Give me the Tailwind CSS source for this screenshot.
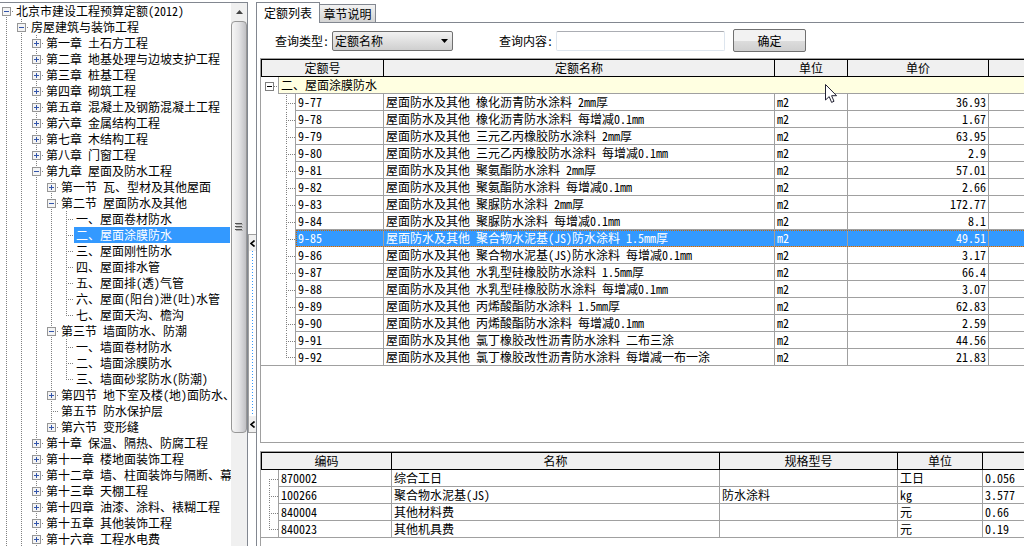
<!DOCTYPE html>
<html lang="zh-CN">
<head>
<meta charset="utf-8">
<title>北京市建设工程预算定额(2012)</title>
<script src="https://cdn.jsdelivr.net/npm/@tailwindcss/browser@4"></script>
</head>
<body class="h-screen overflow-hidden bg-white text-black font-['Noto_Sans_CJK_SC',sans-serif] text-[12px] leading-4 [font-feature-settings:'hwid']">
<div class="flex h-full">

  <!-- Chapter tree -->
  <aside class="mt-0.5 flex w-[248px] shrink-0 border-t border-r border-[#828790]">
    <ul id="tree" role="tree" class="min-w-0 flex-1"></ul>
    <div class="ml-px flex w-4 shrink-0 flex-col bg-[#f0f0f0]">
      <button type="button" aria-label="向上滚动" class="flex h-[18px] items-center justify-center">
        <svg width="7" height="4" viewBox="0 0 7 4"><path d="M3.5 0L7 4H0z" fill="#444"/></svg>
      </button>
      <div class="flex h-[412px] flex-col items-center justify-center rounded-sm border border-[#979797] bg-linear-to-r from-[#f6f6f6] via-[#e4e4e6] to-[#c0c0c4]">
        <svg width="8" height="8" viewBox="0 0 8 8" shape-rendering="crispEdges"><path d="M0 .5H7M0 3.5H7M0 6.5H7" stroke="#555"/><path d="M1 1.5H8M1 4.5H8M1 7.5H8" stroke="#aaa"/></svg>
      </div>
    </div>
  </aside>

  <!-- Splitter with collapse grip -->
  <div class="flex w-2 shrink-0 flex-col pt-[234px]">
    <div class="flex h-[199px] flex-col items-center justify-between border border-r-0 border-[#a0a0a0] bg-white">
      <button type="button" aria-label="折叠" class="flex h-4 w-full items-center justify-center bg-[#f0f0f0]"><svg width="5" height="7" viewBox="0 0 5 7"><path d="M4.5 .5L1 3.5L4.5 6.5" fill="none" stroke="#000" stroke-width="1.6"/></svg></button>
      <div class="w-px flex-1 bg-[repeating-linear-gradient(#3399ff_0_1px,#ffffff_1px_3px)]"></div>
      <button type="button" aria-label="折叠" class="flex h-4 w-full items-center justify-center bg-[#f0f0f0]"><svg width="5" height="7" viewBox="0 0 5 7"><path d="M4.5 .5L1 3.5L4.5 6.5" fill="none" stroke="#000" stroke-width="1.6"/></svg></button>
    </div>
  </div>

  <main class="flex min-w-0 flex-1 flex-col pt-0.5">
    <div role="tablist" class="flex h-[21px] items-end">
      <button type="button" role="tab" aria-selected="true" class="h-[21px] w-16 border border-b-0 border-[#828790] bg-white">定额列表</button>
      <button type="button" role="tab" aria-selected="false" class="h-[19px] w-14 border border-l-0 border-[#828790] bg-linear-to-b from-[#f2f2f2] to-[#d4d4d4]">章节说明</button>
      <div class="h-px flex-1 bg-[#828790]"></div>
    </div>

    <div class="flex min-h-0 flex-1 flex-col border-l border-[#828790] pl-[3px]">
      <form class="flex h-[35px] items-center pl-[15px]">
        <label for="kind" class="w-[57px]">查询类型:</label>
        <div class="relative w-[121px]">
          <select id="kind" class="h-5 w-full appearance-none rounded-xs border border-[#707070] bg-linear-to-b from-[#f2f2f2] to-[#cfcfcf] pl-0.5 text-[12px] leading-4"><option>定额名称</option></select>
          <svg class="pointer-events-none absolute top-2 right-[5px]" width="7" height="4" viewBox="0 0 7 4"><path d="M0 0H7L3.5 4z"/></svg>
        </div>
        <label for="content" class="ml-[46px] w-[57px]">查询内容:</label>
        <input id="content" type="text" class="h-5 w-[169px] rounded-xs border border-[#dde5ee] border-t-[#abadb3] px-1">
        <button type="button" class="ml-2 h-[23px] w-[73px] rounded-xs border border-[#707070] bg-linear-to-b from-[#f2f2f2] from-50% via-[#dddddd] via-51% to-[#cfcfcf]">确定</button>
      </form>

      <section class="relative h-[385px] border border-r-0 border-[#a0a0a0]">
        <table class="w-full table-fixed border-separate border-spacing-0">
          <colgroup><col class="w-[18px]"><col class="w-[17px]"><col class="w-[88px]"><col class="w-[391px]"><col class="w-[73px]"><col class="w-[141px]"><col></colgroup>
          <thead>
            <tr class="h-[18px] bg-[#f0f0f0]">
              <th colspan="3" class="border border-black p-0 font-normal">定额号</th>
              <th class="border border-l-0 border-black p-0 font-normal">定额名称</th>
              <th class="border border-l-0 border-black p-0 font-normal">单位</th>
              <th class="border border-l-0 border-black p-0 font-normal">单价</th>
              <th class="border-y border-black p-0"></th>
            </tr>
          </thead>
          <tbody id="quota"></tbody>
        </table>
        <svg class="absolute top-[25px] left-[564px]" width="13" height="20" viewBox="0 0 13 20"><path d="M.5 .5V16L4.2 12.6L6.6 18.4L9 17.3L6.6 11.7H11.6z" fill="#fff" stroke="#223" stroke-width="1"/></svg>
      </section>

      <section class="mt-2 flex-1 border-t border-l border-[#a0a0a0]">
        <table class="w-full table-fixed border-separate border-spacing-0">
          <colgroup><col class="w-[18px]"><col class="w-[113px]"><col class="w-[328px]"><col class="w-[178px]"><col class="w-[85px]"><col></colgroup>
          <thead>
            <tr class="h-[18px] bg-[#f0f0f0]">
              <th colspan="2" class="border border-black p-0 font-normal">编码</th>
              <th class="border border-l-0 border-black p-0 font-normal">名称</th>
              <th class="border border-l-0 border-black p-0 font-normal">规格型号</th>
              <th class="border border-l-0 border-black p-0 font-normal">单位</th>
              <th class="border-y border-black p-0"></th>
            </tr>
          </thead>
          <tbody id="parts"></tbody>
        </table>
      </section>
    </div>
  </main>
</div>

<script>
// [level, marker (+ collapsed, - expanded, . leaf, L last leaf, P last collapsed), label]
const nodes = [
  [0,'-','北京市建设工程预算定额(2012)'],
  [1,'-','房屋建筑与装饰工程'],
  [2,'+','第一章 土石方工程'],
  [2,'+','第二章 地基处理与边坡支护工程'],
  [2,'+','第三章 桩基工程'],
  [2,'+','第四章 砌筑工程'],
  [2,'+','第五章 混凝土及钢筋混凝土工程'],
  [2,'+','第六章 金属结构工程'],
  [2,'+','第七章 木结构工程'],
  [2,'+','第八章 门窗工程'],
  [2,'-','第九章 屋面及防水工程'],
  [3,'+','第一节 瓦、型材及其他屋面'],
  [3,'-','第二节 屋面防水及其他'],
  [4,'.','一、屋面卷材防水'],
  [4,'.','二、屋面涂膜防水'],
  [4,'.','三、屋面刚性防水'],
  [4,'.','四、屋面排水管'],
  [4,'.','五、屋面排(透)气管'],
  [4,'.','六、屋面(阳台)泄(吐)水管'],
  [4,'L','七、屋面天沟、檐沟'],
  [3,'-','第三节 墙面防水、防潮'],
  [4,'.','一、墙面卷材防水'],
  [4,'.','二、墙面涂膜防水'],
  [4,'L','三、墙面砂浆防水(防潮)'],
  [3,'+','第四节 地下室及楼(地)面防水、'],
  [3,'.','第五节 防水保护层'],
  [3,'P','第六节 变形缝'],
  [2,'+','第十章 保温、隔热、防腐工程'],
  [2,'+','第十一章 楼地面装饰工程'],
  [2,'+','第十二章 墙、柱面装饰与隔断、幕'],
  [2,'+','第十三章 天棚工程'],
  [2,'+','第十四章 油漆、涂料、裱糊工程'],
  [2,'+','第十五章 其他装饰工程'],
  [2,'+','第十六章 工程水电费']
];
const dots = (d) => `<path d="${d}" stroke="#808080" stroke-dasharray="1 1" fill="none"/>`;
const cell = (inner) => `<svg class="block shrink-0" width="15" height="16" viewBox="0 0 15 16" shape-rendering="crispEdges">${inner}</svg>`;
document.getElementById('tree').innerHTML = nodes.map(([level, kind, label], i) => {
  const open = kind === '-', box = open || kind === '+' || kind === 'P', last = kind === 'L' || kind === 'P';
  const guides = cell(dots('M6.5 0V16')).repeat(level);
  const lines = dots(`M6.5 ${i ? 0 : 8}V${last ? 8 : 16}`) + dots('M6 8.5H14');
  const mark = box ? `<rect x="2.5" y="4.5" width="8" height="8" fill="#f4f4f4" stroke="#969696"/><path d="M4 8.5H9${open ? '' : 'M6.5 6V11'}" stroke="#3355aa"/>` : '';
  const knob = box ? `<button type="button" aria-label="${open ? '折叠' : '展开'}" class="block shrink-0">${cell(lines + mark)}</button>` : cell(lines);
  const text = i === 14
    ? `<span class="-ml-px flex-1 bg-[#3399ff] pl-0.5 text-white">${label}</span>`
    : `<span class="pl-px">${label}</span>`;
  return `<li role="treeitem" class="flex h-4 whitespace-nowrap">${guides}${knob}${text}</li>`;
}).join('');

const quota = [
  ['9-77','橡化沥青防水涂料 2mm厚','36.93'],
  ['9-78','橡化沥青防水涂料 每增减0.1mm','1.67'],
  ['9-79','三元乙丙橡胶防水涂料 2mm厚','63.95'],
  ['9-80','三元乙丙橡胶防水涂料 每增减0.1mm','2.9'],
  ['9-81','聚氨酯防水涂料 2mm厚','57.01'],
  ['9-82','聚氨酯防水涂料 每增减0.1mm','2.66'],
  ['9-83','聚脲防水涂料 2mm厚','172.77'],
  ['9-84','聚脲防水涂料 每增减0.1mm','8.1'],
  ['9-85','聚合物水泥基(JS)防水涂料 1.5mm厚','49.51'],
  ['9-86','聚合物水泥基(JS)防水涂料 每增减0.1mm','3.17'],
  ['9-87','水乳型硅橡胶防水涂料 1.5mm厚','66.4'],
  ['9-88','水乳型硅橡胶防水涂料 每增减0.1mm','3.07'],
  ['9-89','丙烯酸酯防水涂料 1.5mm厚','62.83'],
  ['9-90','丙烯酸酯防水涂料 每增减0.1mm','2.59'],
  ['9-91','氯丁橡胶改性沥青防水涂料 二布三涂','44.56'],
  ['9-92','氯丁橡胶改性沥青防水涂料 每增减一布一涂','21.83']
];
const branch = (w, x, first, last) => `<svg class="block" width="${w}" height="16" viewBox="0 0 ${w} 16" shape-rendering="crispEdges">${dots(`M${x}.5 ${first ? 8 : 0}V${last ? 8 : 16}`)}${dots(`M${x} 8.5H${w}`)}</svg>`;
const td = 'border-r border-b border-[#a0a0a0] py-0 pr-0.5 pl-0.5 whitespace-nowrap';
document.getElementById('quota').innerHTML =
  `<tr class="h-[17px]"><td class="border-r border-[#a0a0a0] p-0"><button type="button" aria-label="折叠" class="block"><svg class="block" width="17" height="16" viewBox="0 0 17 16" shape-rendering="crispEdges"><rect x="4.5" y="4.5" width="8" height="8" fill="#fff" stroke="#808080"/><path d="M6 8.5H11" stroke="#000"/>${dots('M13 8.5H17')}</svg></button></td><td colspan="6" class="border-b border-[#a0a0a0] bg-[#ffffe1] py-0 pl-0.5">二、屋面涂膜防水</td></tr>` +
  quota.map(([code, name, price], i) => {
    const last = i === quota.length - 1;
    const row = i === 8 ? 'relative h-[17px] bg-[#3399ff] text-white' : 'h-[17px]';
    const focus = i === 8 ? '<span class="absolute inset-y-0 right-0 left-[35px] border border-r-0 border-dotted border-[#cc6600]"></span>' : '';
    return `<tr class="${row}"><td colspan="2" class="${last ? 'border-r border-b border-[#a0a0a0] bg-white p-0' : 'border-r border-[#a0a0a0] bg-white p-0'}"><div class="pl-[17px]">${branch(17, 8, false, last)}</div></td><td class="${td}">${code}</td><td class="${td}">屋面防水及其他 ${name}</td><td class="${td}">m2</td><td class="${td} text-right">${price}</td><td class="border-b border-[#a0a0a0] p-0">${focus}</td></tr>`;
  }).join('');

const parts = [
  ['870002','综合工日','','工日','0.056'],
  ['100266','聚合物水泥基(JS)','防水涂料','kg','3.577'],
  ['840004','其他材料费','','元','0.66'],
  ['840023','其他机具费','','元','0.19']
];
document.getElementById('parts').innerHTML = parts.map((r, i) =>
  `<tr class="h-[17px]"><td class="${i === 3 ? 'border-r border-b border-[#a0a0a0] p-0' : 'border-r border-[#a0a0a0] p-0'}">${branch(17, 8, i === 0, i === 3)}</td>` +
  r.map((v, k) => `<td class="${k === 4 ? 'border-b border-[#a0a0a0] py-0 pl-0.5' : td}">${v}</td>`).join('') + '</tr>').join('');
</script>
</body>
</html>
